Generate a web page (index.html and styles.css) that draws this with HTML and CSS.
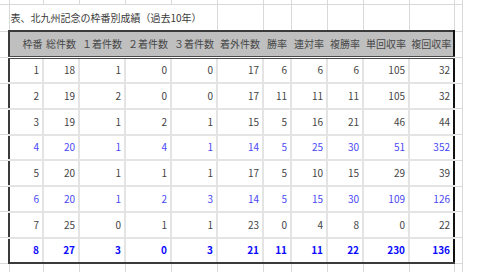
FILE: index.html
```html
<!DOCTYPE html>
<html lang="ja">
<head>
<meta charset="utf-8">
<title>北九州記念の枠番別成績</title>
<link rel="stylesheet" href="styles.css">
</head>
<body>
<table class="sheet">
  <colgroup>
    <col class="w9"><col class="w34"><col class="w36"><col class="w46"><col class="w46"><col class="w46"><col class="w46"><col class="w28"><col class="w36"><col class="w36"><col class="w46"><col class="w45"><col class="w8">
  </colgroup>
  <tr class="r-top"><td></td><td></td><td></td><td></td><td></td><td></td><td></td><td></td><td></td><td></td><td></td><td></td><td></td></tr>
  <tr class="r-title"><td></td><td class="title" colspan="5">表、北九州記念の枠番別成績（過去10年）</td><td></td><td></td><td></td><td></td><td></td><td></td><td></td></tr>
  <tr class="r-head"><td></td><th class="first h-right">枠番</th><th>総件数</th><th>１着件数</th><th>２着件数</th><th>３着件数</th><th>着外件数</th><th>勝率</th><th>連対率</th><th>複勝率</th><th>単回収率</th><th class="last">複回収率</th><td></td></tr>
  <tr class="r-data tall"><td></td><td class="first">1</td><td>18</td><td>1</td><td>0</td><td>0</td><td>17</td><td>6</td><td>6</td><td>6</td><td>105</td><td class="last">32</td><td></td></tr>
  <tr class="r-data"><td></td><td class="first">2</td><td>19</td><td>2</td><td>0</td><td>0</td><td>17</td><td>11</td><td>11</td><td>11</td><td>105</td><td class="last">32</td><td></td></tr>
  <tr class="r-data tall"><td></td><td class="first">3</td><td>19</td><td>1</td><td>2</td><td>1</td><td>15</td><td>5</td><td>16</td><td>21</td><td>46</td><td class="last">44</td><td></td></tr>
  <tr class="r-data blue"><td></td><td class="first">4</td><td>20</td><td>1</td><td>4</td><td>1</td><td>14</td><td>5</td><td>25</td><td>30</td><td>51</td><td class="last">352</td><td></td></tr>
  <tr class="r-data tall"><td></td><td class="first">5</td><td>20</td><td>1</td><td>1</td><td>1</td><td>17</td><td>5</td><td>10</td><td>15</td><td>29</td><td class="last">39</td><td></td></tr>
  <tr class="r-data blue"><td></td><td class="first">6</td><td>20</td><td>1</td><td>2</td><td>3</td><td>14</td><td>5</td><td>15</td><td>30</td><td>109</td><td class="last">126</td><td></td></tr>
  <tr class="r-data tall"><td></td><td class="first">7</td><td>25</td><td>0</td><td>1</td><td>1</td><td>23</td><td>0</td><td>4</td><td>8</td><td>0</td><td class="last">22</td><td></td></tr>
  <tr class="r-data r-final blue-bold"><td></td><td class="first">8</td><td>27</td><td>3</td><td>0</td><td>3</td><td>21</td><td>11</td><td>11</td><td>22</td><td>230</td><td class="last">136</td><td></td></tr>
  <tr class="r-after"><td></td><td></td><td></td><td></td><td></td><td></td><td></td><td></td><td></td><td></td><td></td><td></td><td></td></tr>
</table>
</body>
</html>
```

FILE: styles.css
```css
html, body {
  margin: 0;
  padding: 0;
  background: #ffffff;
}

body {
  width: 480px;
  height: 272px;
  overflow: hidden;
}

.sheet {
  border-collapse: collapse;
  table-layout: fixed;
  width: 462px;
  font-family: "Noto Sans CJK JP", "Noto Sans", sans-serif;
  font-size: 10px;
  color: #444444;
}

.w9 { width: 9px; }
.w34 { width: 34px; }
.w36 { width: 36px; }
.w46 { width: 46px; }
.w45 { width: 45px; }
.w28 { width: 28px; }
.w8 { width: 8px; }

.sheet td,
.sheet th {
  border: 1px solid #d9d9d9;
  padding: 0 3px 0 0;
  text-align: right;
  font-weight: normal;
  white-space: nowrap;
  overflow: visible;
  line-height: 12px;
  vertical-align: middle;
}

.sheet tr > :first-child {
  border-left: none;
}

.r-top td {
  border-top: none;
  height: 4px;
}

.r-title td {
  height: 25px;
}

.sheet .title {
  text-align: left;
  padding: 0 0 0 1px;
  color: #3a3a3a;
}

.r-head {
  height: 26px;
}

.sheet .r-head th {
  background: #bfbfbf;
  color: #484848;
  text-align: center;
  padding: 0;
  border-top: 2px solid #3a3a3a;
  border-bottom: 3px double #4a4a4a;
  border-left: 1px solid #bfbfbf;
  border-right: 1px solid #bfbfbf;
}

.sheet .r-head th.h-right {
  text-align: right;
  padding-right: 0;
}

.r-data {
  height: 25.5px;
}

.r-data.tall {
  height: 26px;
}

.sheet .r-data td {
  border: 2px solid #e4e4e4;
}

.sheet .r-data td:first-child,
.sheet .r-data td:last-child {
  border: 1px solid #d9d9d9;
  border-left: none;
}

.sheet .r-data td:last-child {
  border-left: 2px solid #111111;
}

.sheet .r-head .first,
.sheet .r-data .first {
  border-left: 2px solid #3a3a3a;
}

.sheet .r-head .last,
.sheet .r-data .last {
  border-right: 2px solid #111111;
}

.sheet .r-final td {
  border-bottom: 2px solid #3a3a3a;
}

.sheet .r-final td:first-child,
.sheet .r-final td:last-child {
  border-bottom: 1px solid #d9d9d9;
}

.blue td {
  color: #4848f4;
}

.blue-bold td {
  color: #0a0aff;
  font-weight: bold;
}

.r-after td {
  height: 25px;
}
```
